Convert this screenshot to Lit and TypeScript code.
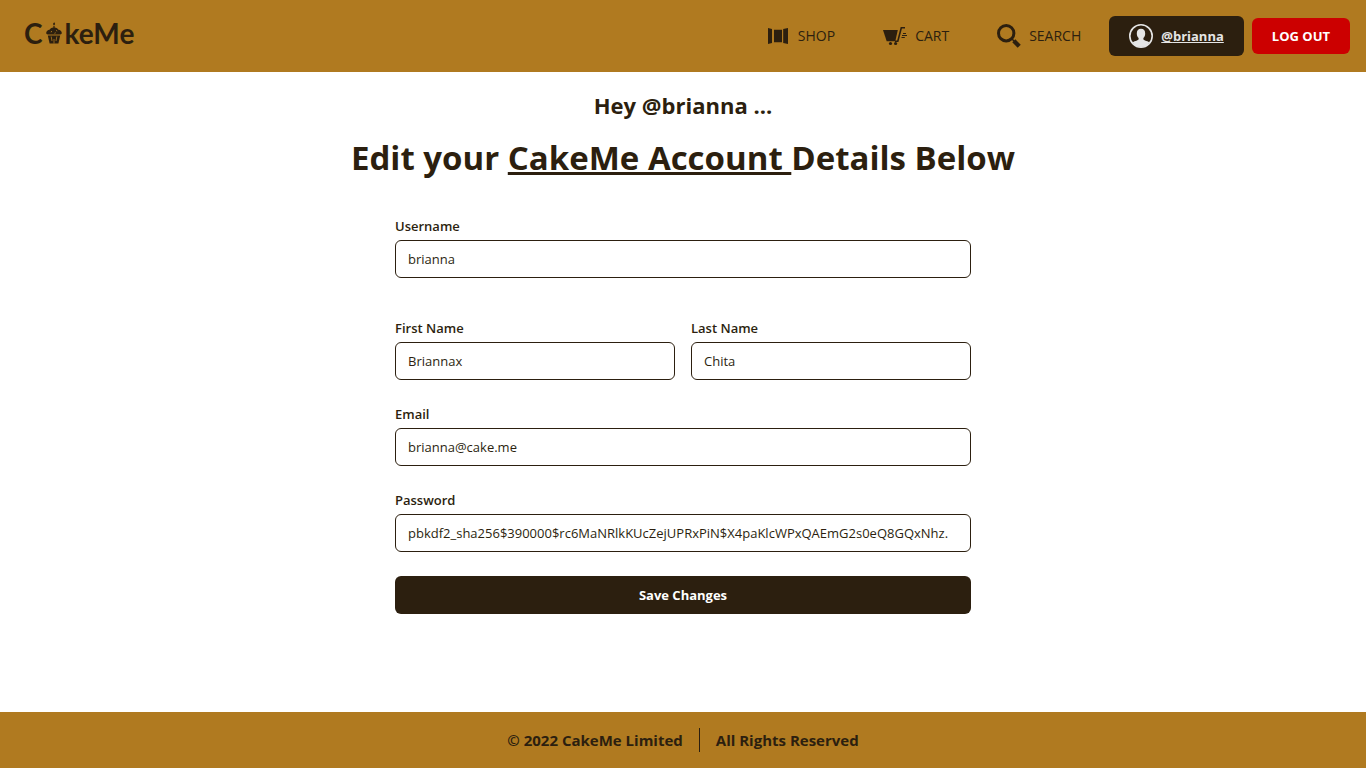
import { LitElement, html, css } from "lit";
import { customElement, property } from "lit/decorators.js";

@customElement("site-header")
class SiteHeader extends LitElement {
  @property() user = "";

  static styles = css`
    :host { display: block; }
    .bar {
      display: flex;
      align-items: center;
      justify-content: space-between;
      box-sizing: border-box;
      min-height: 72px;
      padding: 16px 16px 16px 24px;
      background: #b07a20;
      color: #2c1f0f;
    }
    a { color: inherit; text-decoration: none; }
    svg { display: block; flex: none; }
    .logo {
      display: flex;
      align-items: center;
      gap: 3px;
      font: 700 28px/32px Lato, sans-serif;
      padding-bottom: 6px;
    }
    .actions { display: flex; align-items: center; gap: 8px; }
    .links {
      display: flex;
      gap: 48px;
      margin: 0 20px 0 0;
      padding: 0;
      list-style: none;
    }
    .link { display: flex; align-items: center; gap: 8px; font-size: 14px; line-height: 24px; }
    .profile {
      display: flex;
      align-items: center;
      gap: 8px;
      padding: 8px 20px;
      border-radius: 6px;
      background: #2c1f0f;
      color: #e5e5e5;
      font-size: 13px;
      line-height: 24px;
      font-weight: 700;
    }
    .name { text-decoration: underline; }
    .logout {
      height: 36px;
      padding: 0 20px;
      border: 0;
      border-radius: 6px;
      background: #cc0000;
      color: #fff;
      font: 700 13px/20px "Open Sans", sans-serif;
    }
  `;

  render() {
    return html`
      <header class="bar">
        <a class="logo" href="#" aria-label="CakeMe">
          <span>C</span>
          <svg width="16" height="22" viewBox="0 0 16 22" fill="currentColor">
            <path d="M7.200 1.200 8.400.2 9.100 2 8.500 3H7.300Z" />
            <path d="M7.400 3.800h1.200v1.700c2 .2 3.200.9 3.900 2.300 1.800.3 3 1.200 3.200 2.600.4 1.300-.4 2.100-1.500 2.100H1.800c-1.100 0-1.900-.8-1.500-2.100.2-1.400 1.400-2.300 3.200-2.600.7-1.400 1.900-2.100 3.900-2.300Z" />
            <path d="M1.800 13.400h12.400L12.400 21.600H3.600Z" />
            <path d="M5.200 14.500 6 19M8 17v4.600M10.800 14.500 10 19" stroke="#b07a20" stroke-width=".8" />
            <path d="M4.800 10l1.200-.6M8.500 11.300l1.200-.5M10.200 8.500l1 .5" stroke="#b07a20" stroke-width="1" />
          </svg>
          <span>keMe</span>
        </a>
        <div class="actions">
          <nav>
            <ul class="links">
              <li>
                <a class="link" href="#">
                  <svg width="24" height="24" viewBox="0 0 24 24" fill="currentColor">
                    <path d="M2 4l4 1v14L2 20ZM8 5.800h8v12.400H8ZM22 4l-4.800 1v14L22 20Z" />
                  </svg>
                  SHOP
                </a>
              </li>
              <li>
                <a class="link" href="#">
                  <svg width="24" height="24" viewBox="0 0 24 24" fill="currentColor">
                    <path d="M0 6h14.800L12.300 17.300H3.700Z" />
                    <path d="M22 3.700h-3.700L14.800 17.200H12" fill="none" stroke="currentColor" stroke-width="1.600" />
                    <path d="M20 9.500h3M19 11.500H24M18.500 13.500h3.300" stroke="currentColor" stroke-width="1" />
                    <circle cx="7.500" cy="19.500" r="1.600" />
                    <circle cx="12.600" cy="19.500" r="1.600" />
                  </svg>
                  CART
                </a>
              </li>
              <li>
                <a class="link" href="#">
                  <svg width="24" height="24" viewBox="0 0 24 24" fill="none" stroke="currentColor">
                    <circle cx="9.200" cy="9.200" r="7.700" stroke-width="3" />
                    <path d="M14.800 14.800 17 17" stroke-width="1.500" />
                    <path d="M16.800 16.800 22.200 22.200" stroke-width="4.400" />
                  </svg>
                  SEARCH
                </a>
              </li>
            </ul>
          </nav>
          <a class="profile" href="#">
            <svg width="24" height="24" viewBox="0 0 24 24" fill="currentColor">
              <circle cx="12" cy="12" r="11.200" fill="none" stroke="currentColor" stroke-width="1.600" />
              <path d="M12 4.800c2.700 0 4.300 1.800 4.200 4.600 0 2-.8 3.600-1.800 4.500-.2 1.500.3 2 1.600 2.500 1.600.6 3.300 1 4.300 2C18.400 21.400 15.400 23 12 23s-6.400-1.600-8.300-4.600c1-1 2.700-1.400 4.300-2 1.300-.5 1.800-1 1.600-2.500-1-.9-1.800-2.500-1.800-4.500C7.700 6.600 9.300 4.800 12 4.800Z" />
            </svg>
            <span class="name">@${this.user}</span>
          </a>
          <button class="logout" type="button">LOG OUT</button>
        </div>
      </header>
    `;
  }
}

@customElement("account-form")
class AccountForm extends LitElement {
  static styles = css`
    :host { display: block; }
    .form {
      display: grid;
      grid-template-columns: 1fr 1fr;
      gap: 24px 16px;
      width: 100%;
      max-width: 576px;
      margin: 0 auto;
    }
    .field { display: flex; flex-direction: column; gap: 4px; min-width: 0; }
    .wide { grid-column: 1 / -1; }
    .first { margin-bottom: 16px; }
    label { font-size: 13px; line-height: 20px; font-weight: 600; }
    input {
      box-sizing: border-box;
      width: 100%;
      height: 38px;
      padding: 0 12px;
      border: 1px solid #2c1f0f;
      border-radius: 6px;
      background: #fff;
      color: #2c1f0f;
      font: 400 13px/20px "Open Sans", sans-serif;
    }
    .save {
      height: 38px;
      border: 0;
      border-radius: 6px;
      background: #2c1f0f;
      color: #fff;
      font: 700 13px/20px "Open Sans", sans-serif;
    }
  `;

  private field(id: string, label: string, value: string, cls = "") {
    return html`
      <div class="field ${cls}">
        <label for=${id}>${label}</label>
        <input id=${id} name=${id} type="text" .value=${value} />
      </div>
    `;
  }

  render() {
    return html`
      <form class="form">
        ${this.field("username", "Username", "brianna", "wide first")}
        ${this.field("first-name", "First Name", "Briannax")}
        ${this.field("last-name", "Last Name", "Chita")}
        ${this.field("email", "Email", "brianna@cake.me", "wide")}
        ${this.field("password", "Password", "pbkdf2_sha256$390000$rc6MaNRlkKUcZejUPRxPiN$X4paKlcWPxQAEmG2s0eQ8GQxNhz.", "wide")}
        <button class="save wide" type="button">Save Changes</button>
      </form>
    `;
  }
}

@customElement("app-root")
class AppRoot extends LitElement {
  static styles = css`
    :host {
      display: flex;
      flex-direction: column;
      min-height: 100vh;
      background: #fff;
      color: #2c1f0f;
      font-family: "Open Sans", sans-serif;
    }
    main { flex: 1; padding: 16px; }
    h1, h2 { margin: 0; text-align: center; font-weight: 700; }
    h2 { font-size: 22px; line-height: 34px; }
    h1 { font-size: 33px; line-height: 40px; padding: 16px 0 38px; }
    footer {
      display: flex;
      justify-content: center;
      padding: 16px;
      background: #b07a20;
      font-size: 15px;
      line-height: 24px;
      font-weight: 700;
    }
    .part { padding: 0 16px; }
    .part + .part { border-left: 1px solid #2c1f0f; }
  `;

  render() {
    return html`
      <site-header user="brianna"></site-header>
      <main>
        <h2>Hey @brianna ...</h2>
        <h1>Edit your <u>CakeMe Account </u>Details Below</h1>
        <account-form></account-form>
      </main>
      <footer>
        <span class="part">© 2022 CakeMe Limited</span>
        <span class="part">All Rights Reserved</span>
      </footer>
    `;
  }
}
